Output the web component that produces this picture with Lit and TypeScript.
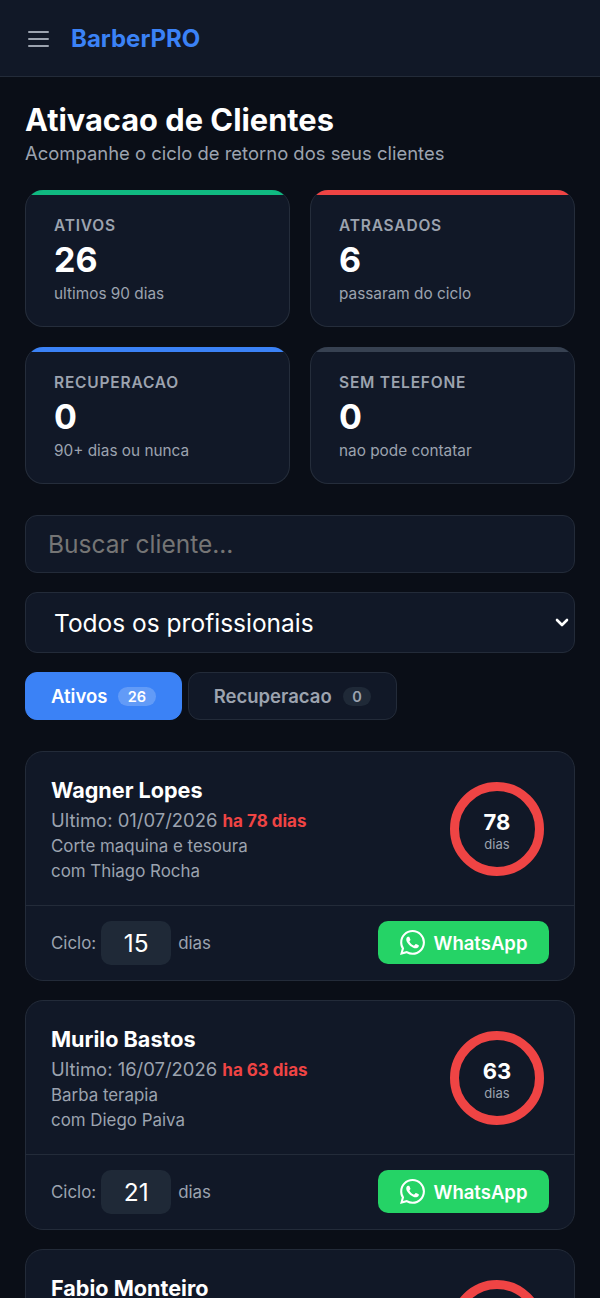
import { LitElement, html, css } from 'lit';
import { customElement } from 'lit/decorators.js';

const WHATSAPP_PATH =
  'M17.472 14.382c-.297-.149-1.758-.867-2.03-.967-.273-.099-.471-.148-.67.15-.197.297-.767.966-.94 1.164-.173.199-.347.223-.644.075-.297-.15-1.255-.463-2.39-1.475-.883-.788-1.48-1.761-1.653-2.059-.173-.297-.018-.458.13-.606.134-.133.298-.347.446-.52.149-.174.198-.298.298-.497.099-.198.05-.371-.025-.52-.075-.149-.669-1.612-.916-2.207-.242-.579-.487-.5-.669-.51-.173-.008-.371-.01-.57-.01-.198 0-.52.074-.792.372-.272.297-1.04 1.016-1.04 2.479 0 1.462 1.065 2.875 1.213 3.074.149.198 2.096 3.2 5.077 4.487.709.306 1.262.489 1.694.625.712.227 1.36.195 1.871.118.571-.085 1.758-.719 2.006-1.413.248-.694.248-1.289.173-1.413-.074-.124-.272-.198-.57-.347m-5.421 7.403h-.004a9.87 9.87 0 01-5.031-1.378l-.361-.214-3.741.982.998-3.648-.235-.374a9.86 9.86 0 01-1.51-5.26c.001-5.45 4.436-9.884 9.888-9.884 2.64 0 5.122 1.03 6.988 2.898a9.825 9.825 0 012.893 6.994c-.003 5.45-4.437 9.884-9.885 9.884m8.413-18.297A11.815 11.815 0 0012.05 0C5.495 0 .16 5.335.157 11.892c0 2.096.547 4.142 1.588 5.945L.057 24l6.305-1.654a11.882 11.882 0 005.683 1.448h.005c6.554 0 11.89-5.335 11.893-11.893a11.821 11.821 0 00-3.48-8.413z';

const stats = [
  { label: 'ATIVOS', value: 26, sub: 'ultimos 90 dias', tone: 'green' },
  { label: 'ATRASADOS', value: 6, sub: 'passaram do ciclo', tone: 'red' },
  { label: 'RECUPERACAO', value: 0, sub: '90+ dias ou nunca', tone: 'blue' },
  { label: 'SEM TELEFONE', value: 0, sub: 'nao pode contatar', tone: 'gray' },
];

const clients = [
  { name: 'Wagner Lopes', last: '01/07/2026', days: 78, service: 'Corte maquina e tesoura', pro: 'Thiago Rocha', cycle: 15 },
  { name: 'Murilo Bastos', last: '16/07/2026', days: 63, service: 'Barba terapia', pro: 'Diego Paiva', cycle: 21 },
];

@customElement('app-root')
export class AppRoot extends LitElement {
  static override styles = css`
    :host {
      display: block;
      height: 100vh;
      overflow: hidden;
      background: #0a0e17;
      color: #fff;
      font-family: Inter, 'Liberation Sans', sans-serif;
    }

    * {
      box-sizing: border-box;
    }

    header {
      display: flex;
      align-items: center;
      gap: 22px;
      height: 77px;
      padding: 1px 28px 0;
      background: #111827;
      border-bottom: 1px solid #232b39;
    }

    .burger {
      display: block;
      width: 21px;
      height: 18px;
    }

    .brand {
      font-size: 24px;
      font-weight: 700;
      color: #3b82f6;
    }

    main {
      display: flex;
      flex-direction: column;
      padding: 24px 25px 0;
    }

    h1 {
      margin: 0;
      font-size: 30.8px;
      line-height: 38px;
      font-weight: 700;
    }

    .subtitle {
      margin: 1px 0 0;
      font-size: 18.45px;
      line-height: 26px;
      color: #9ca3af;
    }

    .stats {
      display: grid;
      grid-template-columns: 1fr 1fr;
      gap: 20px;
      margin-top: 24px;
    }

    /* no top border: the colour bar starts at the card's outer edge */
    .stat {
      height: 137px;
      padding: 26px 28px 25px;
      background: #111827;
      border: 1px solid #252d3b;
      border-top: 0;
      border-radius: 18px;
      position: relative;
      overflow: hidden;
    }

    .stat::before {
      content: '';
      position: absolute;
      top: 0;
      left: 0;
      right: 0;
      height: 5px;
      background: var(--tone);
    }

    .green { --tone: #10b981; }
    .red { --tone: #ef4444; }
    .blue { --tone: #3b82f6; }
    .gray { --tone: #374151; }

    .stat-label {
      margin-bottom: 1px;
      font-size: 15.5px;
      line-height: 20px;
      font-weight: 600;
      letter-spacing: 0.8px;
      color: #9ca3af;
    }

    .stat-value {
      font-size: 34px;
      line-height: 46px;
      font-weight: 700;
    }

    .stat-sub {
      font-size: 15.35px;
      line-height: 22px;
      color: #9ca3af;
    }

    .search,
    .pro-select {
      display: block;
      width: 100%;
      background-color: #111827;
      border: 1px solid #232b39;
      border-radius: 12px;
      color: #fff;
      font-family: inherit;
      font-size: 24.5px;
      outline: none;
    }

    .search {
      height: 58px;
      margin-top: 31px;
      padding: 0 22px;
    }

    .pro-select {
      height: 61px;
      margin-top: 19px;
      padding: 0 0 0 28px;
      appearance: none;
      background-image: url("data:image/svg+xml,%3Csvg xmlns='http://www.w3.org/2000/svg' viewBox='0 0 14 10'%3E%3Cpath d='M2 2l5 5 5-5' fill='none' stroke='white' stroke-width='2.6' stroke-linecap='round' stroke-linejoin='round'/%3E%3C/svg%3E");
      background-repeat: no-repeat;
      background-position: right 5px center;
      background-size: 14px 10px;
    }

    .tabs {
      display: flex;
      gap: 6px;
      margin-top: 19px;
    }

    .tab {
      display: flex;
      align-items: center;
      gap: 11px;
      height: 48px;
      padding: 0 25px;
      background: #111827;
      border: 1px solid #232b39;
      border-radius: 12px;
      font-size: 18.5px;
      font-weight: 600;
      color: #9ca3af;
    }

    .tab.active {
      background: #3b82f6;
      border-color: #3b82f6;
      color: #fff;
    }

    .count {
      padding: 0 9.5px;
      height: 19px;
      line-height: 19px;
      background: #1f2937;
      border-radius: 10px;
      font-size: 14.5px;
    }

    .tab.active .count {
      background: rgba(255, 255, 255, 0.2);
    }

    .list {
      display: flex;
      flex-direction: column;
      gap: 19px;
      margin-top: 31px;
    }

    .client {
      background: #111827;
      border: 1px solid #232b39;
      border-radius: 18px;
    }

    .client-top {
      display: flex;
      justify-content: space-between;
      align-items: center;
      padding: 22px 30px 21px 25px;
      border-bottom: 1px solid #232b39;
    }

    .info {
      min-height: 110px;
    }

    .name {
      font-size: 21.6px;
      line-height: 33px;
      font-weight: 700;
    }

    .last {
      height: 27px;
      font-size: 18.45px;
      line-height: 26px;
      color: #9ca3af;
    }

    .late {
      font-size: 17px;
      font-weight: 700;
      color: #ef4444;
    }

    .detail {
      font-size: 16.9px;
      line-height: 25px;
      color: #9ca3af;
    }

    .ring {
      flex: none;
      display: flex;
      flex-direction: column;
      align-items: center;
      justify-content: center;
      width: 94px;
      height: 94px;
      padding-top: 4px;
      border: 9px solid #ef4444;
      border-radius: 50%;
    }

    .ring-days {
      font-size: 22px;
      line-height: 26px;
      font-weight: 700;
    }

    .ring-unit {
      font-size: 13px;
      line-height: 18px;
      color: #9ca3af;
    }

    .client-bottom {
      display: flex;
      justify-content: space-between;
      align-items: flex-start;
      padding: 15px 25px;
    }

    .cycle {
      display: flex;
      align-items: center;
      gap: 5px;
      font-size: 16.9px;
      color: #9ca3af;
    }

    .cycle input {
      width: 70px;
      height: 44px;
      margin-right: 2px;
      background: #1f2937;
      border: none;
      border-radius: 10px;
      color: #fff;
      font-family: inherit;
      font-size: 24.5px;
      text-align: center;
      outline: none;
    }

    .wa {
      display: flex;
      align-items: center;
      justify-content: center;
      gap: 9px;
      width: 171px;
      height: 43px;
      background: #25d366;
      border: none;
      border-radius: 10px;
      color: #fff;
      font-family: inherit;
      font-size: 18.5px;
      font-weight: 600;
    }

    .wa svg {
      width: 25px;
      height: 25px;
      fill: currentColor;
    }
  `;

  renderClient(c: (typeof clients)[number]) {
    return html`
      <article class="client">
        <div class="client-top">
          <div class="info">
            <div class="name">${c.name}</div>
            <div class="last">Ultimo: ${c.last} <span class="late">ha ${c.days} dias</span></div>
            <div class="detail">${c.service}</div>
            <div class="detail">com ${c.pro}</div>
          </div>
          <div class="ring">
            <span class="ring-days">${c.days}</span>
            <span class="ring-unit">dias</span>
          </div>
        </div>
        <div class="client-bottom">
          <label class="cycle">
            Ciclo:
            <input type="text" .value=${String(c.cycle)} />
            dias
          </label>
          <button class="wa">
            <svg viewBox="0 0 24 24"><path d=${WHATSAPP_PATH}></path></svg>
            WhatsApp
          </button>
        </div>
      </article>
    `;
  }

  override render() {
    return html`
      <header>
        <svg class="burger" viewBox="0 0 21 18" fill="none" stroke="#9ca3af" stroke-width="2" stroke-linecap="round">
          <path d="M1 2h19M1 9h19M1 16h19"></path>
        </svg>
        <span class="brand">BarberPRO</span>
      </header>
      <main>
        <h1>Ativacao de Clientes</h1>
        <p class="subtitle">Acompanhe o ciclo de retorno dos seus clientes</p>

        <section class="stats">
          ${stats.map(s => html`
            <div class="stat ${s.tone}">
              <div class="stat-label">${s.label}</div>
              <div class="stat-value">${s.value}</div>
              <div class="stat-sub">${s.sub}</div>
            </div>
          `)}
        </section>

        <input class="search" type="text" placeholder="Buscar cliente..." />
        <select class="pro-select">
          <option>Todos os profissionais</option>
        </select>

        <nav class="tabs">
          <div class="tab active">Ativos <span class="count">26</span></div>
          <div class="tab">Recuperacao <span class="count">0</span></div>
        </nav>

        <section class="list">
          ${clients.map(c => this.renderClient(c))}
          <article class="client">
            <div class="client-top">
              <div class="info"><div class="name">Fabio Monteiro</div></div>
              <div class="ring"></div>
            </div>
          </article>
        </section>
      </main>
    `;
  }
}
